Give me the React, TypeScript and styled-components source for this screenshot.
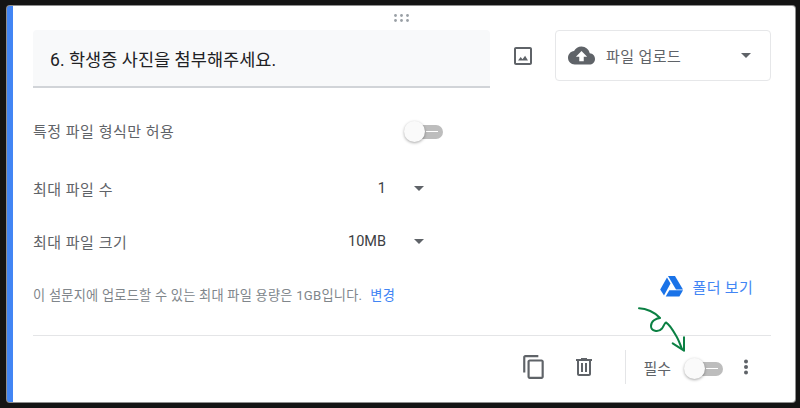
import { FC } from "react";
import styled, { createGlobalStyle } from "styled-components";

const GlobalStyle = createGlobalStyle`
  html, body {
    margin: 0;
    padding: 0;
    background: #141414;
    font-family: Roboto, "Noto Sans CJK KR", sans-serif;
  }
`;

const Dots: FC = () => (
  <svg width="16" height="8" viewBox="0 0 16 8" fill="#9aa0a6">
    {[1.5, 7.5, 13.5].map((x) => (
      <g key={x}>
        <circle cx={x} cy="1.5" r="1.4" />
        <circle cx={x} cy="6.5" r="1.4" />
      </g>
    ))}
  </svg>
);

const ImageIcon: FC = () => (
  <svg width="24" height="24" viewBox="0 0 24 24" fill="#5f6368">
    <path d="M19 5v14H5V5h14m0-2H5c-1.100 0-2 .9-2 2v14c0 1.100.9 2 2 2h14c1.100 0 2-.9 2-2V5c0-1.100-.9-2-2-2z" />
    <path d="M14.100 11.800l-2.600 3.400-1.800-2.200L7 16.500h10z" />
  </svg>
);

const CloudIcon: FC = () => (
  <svg width="27" height="27" viewBox="0 0 24 24" fill="#5f6368">
    <path d="M19.350 10.040C18.670 6.590 15.640 4 12 4 9.110 4 6.600 5.640 5.350 8.040 2.340 8.360 0 10.910 0 14c0 3.310 2.690 6 6 6h13c2.760 0 5-2.240 5-5 0-2.640-2.050-4.780-4.650-4.960zM14 13v4h-4v-4H7l5-5 5 5h-3z" />
  </svg>
);

const DriveIcon: FC = () => (
  <svg width="23" height="21" viewBox="0 0 23 21" fill="#1a73e8">
    <path d="M8 0h7l8 13.500h-7z" />
    <path d="M7 1.500l3.500 6L4 19.500.2 13.500z" />
    <path d="M5.700 20.500l3.600-6.200H23l-3.600 6.200z" />
  </svg>
);

const CopyIcon: FC = () => (
  <svg width="26" height="26" viewBox="0 0 24 24" fill="#5f6368">
    <path d="M16 1H4c-1.100 0-2 .9-2 2v14h2V3h12V1zm3 4H8c-1.100 0-2 .9-2 2v14c0 1.100.9 2 2 2h11c1.100 0 2-.9 2-2V7c0-1.100-.9-2-2-2zm0 16H8V7h11v14z" />
  </svg>
);

const TrashIcon: FC = () => (
  <svg width="24" height="24" viewBox="0 0 24 24" fill="#5f6368">
    <path d="M15 4V3H9v1H4v2h1v13c0 1.100.9 2 2 2h10c1.100 0 2-.9 2-2V6h1V4h-5zm2 15H7V6h10v13z" />
    <path d="M9 8h2v9H9zm4 0h2v9h-2z" />
  </svg>
);

const MoreIcon: FC = () => (
  <svg width="24" height="24" viewBox="0 0 24 24" fill="#5f6368">
    <circle cx="12" cy="6.500" r="2" />
    <circle cx="12" cy="12" r="2" />
    <circle cx="12" cy="17.500" r="2" />
  </svg>
);

const Toggle: FC = () => (
  <ToggleTrack>
    <ToggleLine />
    <ToggleKnob />
  </ToggleTrack>
);

const App: FC = () => (
  <>
    <GlobalStyle />
    <Page>
      <Card>
        <Handle>
          <Dots />
        </Handle>
        <TopRow>
          <QuestionField>6. 학생증 사진을 첨부해주세요.</QuestionField>
          <ImageButton>
            <ImageIcon />
          </ImageButton>
          <TypeSelect>
            <CloudIcon />
            <TypeLabel>파일 업로드</TypeLabel>
            <Caret />
          </TypeSelect>
        </TopRow>
        <OptionRow $height={58}>
          <OptionLabel>특정 파일 형식만 허용</OptionLabel>
          <ToggleSlot>
            <Toggle />
          </ToggleSlot>
        </OptionRow>
        <OptionRow $height={58}>
          <OptionLabel>최대 파일 수</OptionLabel>
          <OptionValue>1</OptionValue>
          <Caret />
        </OptionRow>
        <OptionRow $height={48}>
          <OptionLabel>최대 파일 크기</OptionLabel>
          <OptionValue>10MB</OptionValue>
          <Caret />
        </OptionRow>
        <NoteRow>
          <Note>
            이 설문지에 업로드할 수 있는 최대 파일 용량은 1GB입니다.
            <NoteLink>변경</NoteLink>
          </Note>
          <FolderLink>
            <DriveIcon />
            폴더 보기
          </FolderLink>
        </NoteRow>
        <Footer>
          <IconSlot $left={0}>
            <CopyIcon />
          </IconSlot>
          <IconSlot $left={25}>
            <TrashIcon />
          </IconSlot>
          <FooterDivider />
          <RequiredLabel>필수</RequiredLabel>
          <Toggle />
          <IconSlot $left={11}>
            <MoreIcon />
          </IconSlot>
        </Footer>
        <Scribble width="60" height="60" viewBox="0 0 60 60" fill="none">
          <path
            d="M1 1.300C8 1.500 17 5 22 11C18 11.500 13 14 13 19C13 24 20 26 24 21.500C26 19 26.500 16 28 15.500C31 17 36 25 38.700 29.700C41 34 42.500 38 44 42"
            stroke="#0b8043"
            strokeWidth="2"
            strokeLinecap="round"
            strokeLinejoin="round"
          />
          <path
            d="M34.700 36.300L46 43.700L46 30.300"
            stroke="#0b8043"
            strokeWidth="2"
            strokeLinecap="round"
            strokeLinejoin="round"
          />
        </Scribble>
      </Card>
    </Page>
  </>
);

export default App;

const Page = styled.div`
  width: 800px;
  height: 408px;
  padding: 6px 5px 0 7px;
  box-sizing: border-box;
  overflow: hidden;
`;

const Card = styled.div`
  position: relative;
  height: 396px;
  box-sizing: border-box;
  background: #fff;
  border-left: 6px solid #4285f4;
  border-radius: 3px;
  box-shadow: 0 0 0 1px #8f8f8f;
  padding-left: 20px;
  padding-right: 24px;
`;

const Handle = styled.div`
  display: flex;
  justify-content: center;
  padding-top: 8px;
  height: 16px;
`;

const TopRow = styled.div`
  display: flex;
  align-items: flex-start;
  height: 71px;
`;

const QuestionField = styled.div`
  width: 457px;
  height: 58px;
  box-sizing: border-box;
  padding-left: 17px;
  background: #f8f9fa;
  border-bottom: 2px solid #d1d4d8;
  border-radius: 4px 4px 0 0;
  display: flex;
  align-items: center;
  font-size: 17.500px;
  letter-spacing: 0.05px;
  color: #202124;
`;

const ImageButton = styled.div`
  width: 65px;
  height: 51px;
  display: flex;
  align-items: center;
  justify-content: center;
`;

const TypeSelect = styled.div`
  flex: 1;
  height: 51px;
  box-sizing: border-box;
  border: 1px solid #e6e7e9;
  border-radius: 4px;
  display: flex;
  align-items: center;
  padding: 0 19px 0 12px;
`;

const TypeLabel = styled.span`
  flex: 1;
  margin-left: 11px;
  font-size: 15px;
  color: #5f6368;
  letter-spacing: 0.4px;
`;

const Caret = styled.span`
  width: 0;
  height: 0;
  border-left: 5px solid transparent;
  border-right: 5px solid transparent;
  border-top: 5px solid #5f6368;
  margin-left: 28px;
`;

const OptionRow = styled.div<{ $height: number }>`
  display: flex;
  align-items: center;
  width: 391px;
  height: ${(p) => p.$height}px;
`;

const OptionLabel = styled.span`
  flex: 1;
  font-size: 15px;
  color: #5f6368;
  letter-spacing: 0.5px;
`;

const OptionValue = styled.span`
  font-size: 14.500px;
  color: #3c4043;
`;

const ToggleSlot = styled.div`
  margin-right: -19px;
`;

const ToggleTrack = styled.div`
  position: relative;
  width: 32px;
  height: 14px;
  margin-top: 3px;
  border-radius: 7px;
  background: #bdbdbd;
`;

const ToggleLine = styled.span`
  position: absolute;
  left: 15px;
  right: 5px;
  top: 6.500px;
  height: 1px;
  background: #fff;
`;

const ToggleKnob = styled.span`
  position: absolute;
  left: -7px;
  top: -4px;
  width: 21px;
  height: 21px;
  border-radius: 50%;
  background: #fafafa;
  box-shadow: 0 1px 3px rgba(0, 0, 0, 0.35);
`;

const NoteRow = styled.div`
  display: flex;
  align-items: center;
  justify-content: space-between;
  height: 71px;
  border-bottom: 1px solid #e4e5e7;
  padding-right: 18px;
  padding-bottom: 19px;
  box-sizing: border-box;
`;

const Note = styled.span`
  font-size: 13.200px;
  color: #80868b;
  letter-spacing: 0.24px;
  margin-top: 8px;
`;

const NoteLink = styled.span`
  color: #4285f4;
  margin-left: 8px;
`;

const FolderLink = styled.span`
  display: flex;
  align-items: center;
  gap: 10px;
  font-size: 15px;
  color: #4285f4;
  letter-spacing: 0.3px;
  margin-top: -8px;
`;

const Footer = styled.div`
  display: flex;
  align-items: center;
  justify-content: flex-end;
  height: 62px;
  padding-right: 13px;
`;

const IconSlot = styled.span<{ $left: number }>`
  display: flex;
  margin-left: ${(p) => p.$left}px;
`;

const FooterDivider = styled.span`
  width: 1px;
  height: 34px;
  background: #e4e5e7;
  margin: 0 17px 0 29px;
`;

const RequiredLabel = styled.span`
  font-size: 15px;
  color: #5f6368;
  margin-right: 20px;
`;

const Scribble = styled.svg`
  position: absolute;
  left: 625px;
  top: 301px;
  pointer-events: none;
`;
